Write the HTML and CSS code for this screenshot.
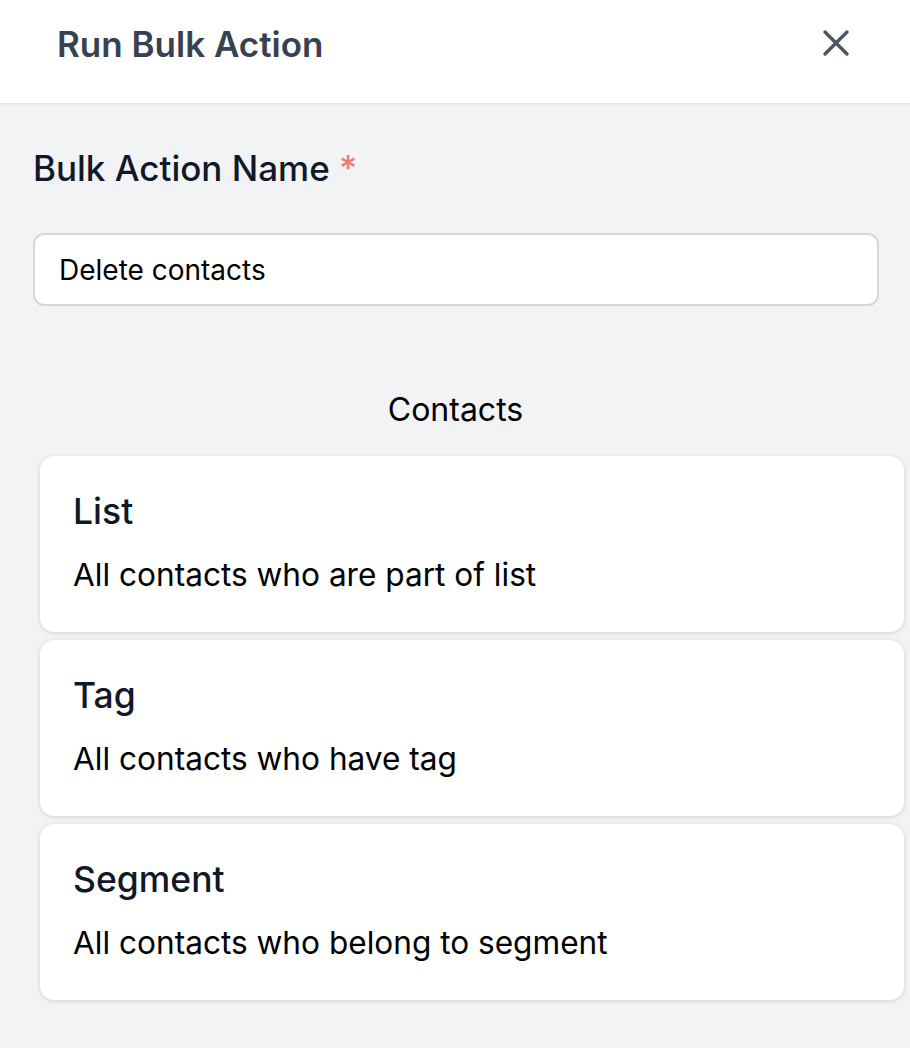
FILE: index.html
```html
<!DOCTYPE html>
<html>
<head>
<meta charset="utf-8">
<link rel="stylesheet" href="styles.css">
</head>
<body>
<div class="panel">
  <header class="header">
    <h1 class="title">Run Bulk Action</h1>
    <button class="close" aria-label="Close">
      <svg width="30" height="30" viewBox="0 0 30 30"><path d="M4 4L26 26M26 4L4 26" stroke="#4b5563" stroke-width="3.4" stroke-linecap="round" fill="none"/></svg>
    </button>
  </header>
  <main class="body">
    <label class="label">Bulk Action Name <span class="req">*</span></label>
    <div class="input">Delete contacts</div>
    <div class="section-title">Contacts</div>
    <div class="cards">
      <div class="card">
        <div class="card-title">List</div>
        <div class="card-desc">All contacts who are part of list</div>
      </div>
      <div class="card">
        <div class="card-title">Tag</div>
        <div class="card-desc">All contacts who have tag</div>
      </div>
      <div class="card">
        <div class="card-title">Segment</div>
        <div class="card-desc">All contacts who belong to segment</div>
      </div>
    </div>
  </main>
</div>
</body>
</html>
```
FILE: styles.css
```css
* { box-sizing: border-box; }
html, body { margin: 0; padding: 0; }
body {
  width: 910px;
  height: 1048px;
  overflow: hidden;
  background: #f2f3f5;
  font-family: Inter, "Noto Sans", sans-serif;
}
.panel { display: flex; flex-direction: column; }
.header {
  height: 104px;
  background: #fff;
  display: flex;
  align-items: flex-start;
  justify-content: space-between;
  padding: 23px 59px 0 57px;
  border-bottom: 1px solid #e2e4e8;
  box-shadow: 0 1px 3px rgba(0,0,0,0.06);
}
.title {
  margin: 0;
  font-size: 35px;
  line-height: 42px;
  font-weight: 600;
  color: #374151;
}
.close {
  border: 0;
  background: none;
  padding: 0;
  margin-top: 5px;
  display: flex;
}
.body {
  display: flex;
  flex-direction: column;
  padding: 43px 6px 0 33px;
}
.label {
  font-size: 35px;
  font-weight: 500;
  color: #111827;
  line-height: 42px;
}
.req { color: #ef7a7a; }
.input {
  margin-top: 44px;
  width: 846px;
  height: 73px;
  background: #fff;
  border: 2px solid #d4d6da;
  border-radius: 11px;
  padding: 0 24px;
  display: flex;
  align-items: center;
  font-size: 28px;
  color: #000;
}
.section-title {
  margin-top: 85px;
  text-align: center;
  font-size: 32px;
  color: #000;
  line-height: 38px;
  padding-right: 26px;
}
.cards {
  margin-top: 27px;
  margin-left: 7px;
  display: flex;
  flex-direction: column;
  gap: 8px;
}
.card {
  width: 864px;
  height: 176px;
  background: #fff;
  border-radius: 14px;
  box-shadow: 0 1px 4px rgba(0,0,0,0.15);
  padding: 35px 33px 0 33px;
}
.card-title {
  font-size: 35.5px;
  font-weight: 500;
  color: #111827;
  line-height: 42px;
}
.card-desc {
  margin-top: 23px;
  font-size: 31.6px;
  color: #000;
  line-height: 38px;
}
```
